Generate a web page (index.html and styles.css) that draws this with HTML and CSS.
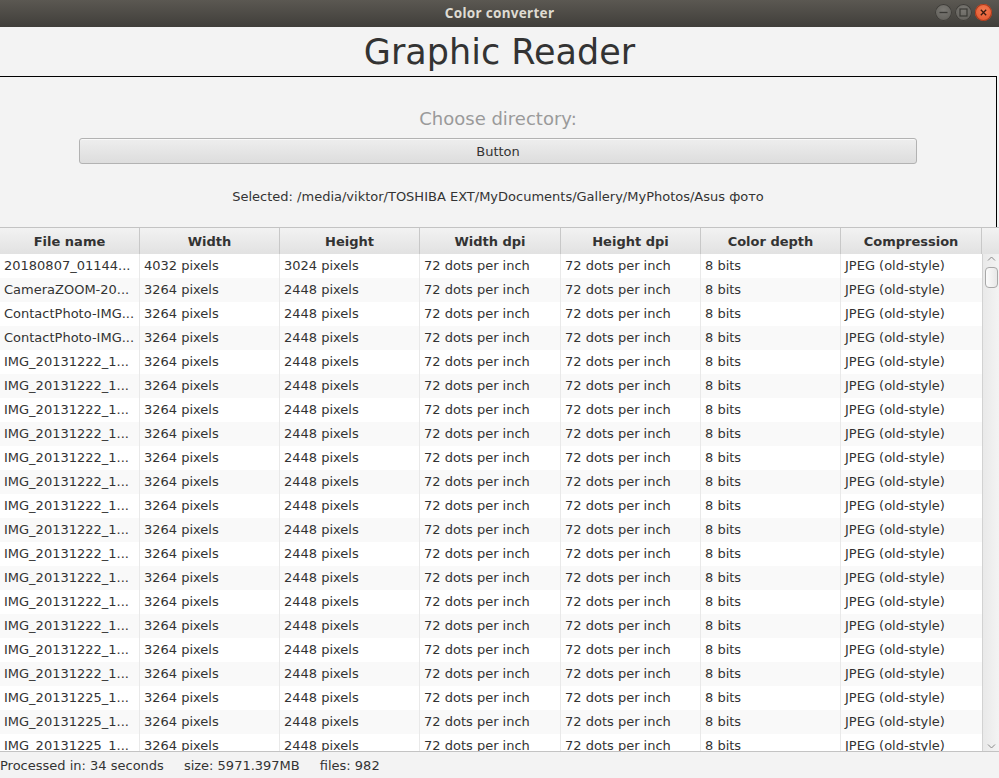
FILE: index.html
```html
<!DOCTYPE html>
<html lang="en">
<head>
<meta charset="utf-8">
<title>Color converter</title>
<link rel="stylesheet" href="styles.css">
</head>
<body>
<div class="window">
  <div class="titlebar">
    <span class="title">Color converter</span>
    <div class="wbtns">
      <span class="wbtn"><svg width="17" height="17" viewBox="0 0 17 17"><path d="M4.5 8.5h8" stroke="#3a3935" stroke-width="1.3"/></svg></span>
      <span class="wbtn"><svg width="17" height="17" viewBox="0 0 17 17"><rect x="5" y="5" width="7" height="7" fill="none" stroke="#3a3935" stroke-width="1.2"/></svg></span>
      <span class="wbtn close"><svg width="17" height="17" viewBox="0 0 17 17"><path d="M5.8 5.8l5.4 5.4M11.2 5.8l-5.4 5.4" stroke="#3a1a10" stroke-width="1.3"/></svg></span>
    </div>
  </div>
  <div class="app">
    <h1 class="heading">Graphic Reader</h1>
    <div class="panel">
      <div class="choose">Choose directory:</div>
      <button class="btn">Button</button>
      <div class="selected">Selected: /media/viktor/TOSHIBA EXT/MyDocuments/Gallery/MyPhotos/Asus фото</div>
    </div>
    <div class="table">
      <div class="thead">
        <div class="th">File name</div>
        <div class="th">Width</div>
        <div class="th">Height</div>
        <div class="th">Width dpi</div>
        <div class="th">Height dpi</div>
        <div class="th">Color depth</div>
        <div class="th">Compression</div>
        <div class="th filler"></div>
      </div>
      <div class="tbody-wrap">
        <div class="tbody">
          <div class="tr"><div class="td">20180807_01144...</div><div class="td">4032 pixels</div><div class="td">3024 pixels</div><div class="td">72 dots per inch</div><div class="td">72 dots per inch</div><div class="td">8 bits</div><div class="td">JPEG (old-style)</div></div>
          <div class="tr"><div class="td">CameraZOOM-20...</div><div class="td">3264 pixels</div><div class="td">2448 pixels</div><div class="td">72 dots per inch</div><div class="td">72 dots per inch</div><div class="td">8 bits</div><div class="td">JPEG (old-style)</div></div>
          <div class="tr"><div class="td">ContactPhoto-IMG...</div><div class="td">3264 pixels</div><div class="td">2448 pixels</div><div class="td">72 dots per inch</div><div class="td">72 dots per inch</div><div class="td">8 bits</div><div class="td">JPEG (old-style)</div></div>
          <div class="tr"><div class="td">ContactPhoto-IMG...</div><div class="td">3264 pixels</div><div class="td">2448 pixels</div><div class="td">72 dots per inch</div><div class="td">72 dots per inch</div><div class="td">8 bits</div><div class="td">JPEG (old-style)</div></div>
          <div class="tr"><div class="td">IMG_20131222_1...</div><div class="td">3264 pixels</div><div class="td">2448 pixels</div><div class="td">72 dots per inch</div><div class="td">72 dots per inch</div><div class="td">8 bits</div><div class="td">JPEG (old-style)</div></div>
          <div class="tr"><div class="td">IMG_20131222_1...</div><div class="td">3264 pixels</div><div class="td">2448 pixels</div><div class="td">72 dots per inch</div><div class="td">72 dots per inch</div><div class="td">8 bits</div><div class="td">JPEG (old-style)</div></div>
          <div class="tr"><div class="td">IMG_20131222_1...</div><div class="td">3264 pixels</div><div class="td">2448 pixels</div><div class="td">72 dots per inch</div><div class="td">72 dots per inch</div><div class="td">8 bits</div><div class="td">JPEG (old-style)</div></div>
          <div class="tr"><div class="td">IMG_20131222_1...</div><div class="td">3264 pixels</div><div class="td">2448 pixels</div><div class="td">72 dots per inch</div><div class="td">72 dots per inch</div><div class="td">8 bits</div><div class="td">JPEG (old-style)</div></div>
          <div class="tr"><div class="td">IMG_20131222_1...</div><div class="td">3264 pixels</div><div class="td">2448 pixels</div><div class="td">72 dots per inch</div><div class="td">72 dots per inch</div><div class="td">8 bits</div><div class="td">JPEG (old-style)</div></div>
          <div class="tr"><div class="td">IMG_20131222_1...</div><div class="td">3264 pixels</div><div class="td">2448 pixels</div><div class="td">72 dots per inch</div><div class="td">72 dots per inch</div><div class="td">8 bits</div><div class="td">JPEG (old-style)</div></div>
          <div class="tr"><div class="td">IMG_20131222_1...</div><div class="td">3264 pixels</div><div class="td">2448 pixels</div><div class="td">72 dots per inch</div><div class="td">72 dots per inch</div><div class="td">8 bits</div><div class="td">JPEG (old-style)</div></div>
          <div class="tr"><div class="td">IMG_20131222_1...</div><div class="td">3264 pixels</div><div class="td">2448 pixels</div><div class="td">72 dots per inch</div><div class="td">72 dots per inch</div><div class="td">8 bits</div><div class="td">JPEG (old-style)</div></div>
          <div class="tr"><div class="td">IMG_20131222_1...</div><div class="td">3264 pixels</div><div class="td">2448 pixels</div><div class="td">72 dots per inch</div><div class="td">72 dots per inch</div><div class="td">8 bits</div><div class="td">JPEG (old-style)</div></div>
          <div class="tr"><div class="td">IMG_20131222_1...</div><div class="td">3264 pixels</div><div class="td">2448 pixels</div><div class="td">72 dots per inch</div><div class="td">72 dots per inch</div><div class="td">8 bits</div><div class="td">JPEG (old-style)</div></div>
          <div class="tr"><div class="td">IMG_20131222_1...</div><div class="td">3264 pixels</div><div class="td">2448 pixels</div><div class="td">72 dots per inch</div><div class="td">72 dots per inch</div><div class="td">8 bits</div><div class="td">JPEG (old-style)</div></div>
          <div class="tr"><div class="td">IMG_20131222_1...</div><div class="td">3264 pixels</div><div class="td">2448 pixels</div><div class="td">72 dots per inch</div><div class="td">72 dots per inch</div><div class="td">8 bits</div><div class="td">JPEG (old-style)</div></div>
          <div class="tr"><div class="td">IMG_20131222_1...</div><div class="td">3264 pixels</div><div class="td">2448 pixels</div><div class="td">72 dots per inch</div><div class="td">72 dots per inch</div><div class="td">8 bits</div><div class="td">JPEG (old-style)</div></div>
          <div class="tr"><div class="td">IMG_20131222_1...</div><div class="td">3264 pixels</div><div class="td">2448 pixels</div><div class="td">72 dots per inch</div><div class="td">72 dots per inch</div><div class="td">8 bits</div><div class="td">JPEG (old-style)</div></div>
          <div class="tr"><div class="td">IMG_20131225_1...</div><div class="td">3264 pixels</div><div class="td">2448 pixels</div><div class="td">72 dots per inch</div><div class="td">72 dots per inch</div><div class="td">8 bits</div><div class="td">JPEG (old-style)</div></div>
          <div class="tr"><div class="td">IMG_20131225_1...</div><div class="td">3264 pixels</div><div class="td">2448 pixels</div><div class="td">72 dots per inch</div><div class="td">72 dots per inch</div><div class="td">8 bits</div><div class="td">JPEG (old-style)</div></div>
          <div class="tr"><div class="td">IMG_20131225_1...</div><div class="td">3264 pixels</div><div class="td">2448 pixels</div><div class="td">72 dots per inch</div><div class="td">72 dots per inch</div><div class="td">8 bits</div><div class="td">JPEG (old-style)</div></div>
        </div>
        <div class="vscroll">
          <svg class="arrow" width="15" height="10" viewBox="0 0 15 10"><path d="M4 6.5l3.5-3.5 3.5 3.5" fill="none" stroke="#8a8a8a" stroke-width="1"/></svg>
          <div class="track"><div class="thumb"></div></div>
          <svg class="arrow" width="15" height="10" viewBox="0 0 15 10"><path d="M4 3.5l3.5 3.5 3.5-3.5" fill="none" stroke="#8a8a8a" stroke-width="1"/></svg>
        </div>
      </div>
    </div>
    <div class="status">
      <span>Processed in: 34 seconds</span>
      <span>size: 5971.397MB</span>
      <span>files: 982</span>
    </div>
  </div>
</div>
</body>
</html>
```

FILE: styles.css
```css
* { box-sizing: border-box; }
html, body { margin: 0; padding: 0; }
body {
  width: 999px;
  height: 778px;
  overflow: hidden;
  background: #f3f3f3;
  font-family: "DejaVu Sans", "Noto Sans", sans-serif;
  color: #333333;
}
.window { width: 999px; height: 778px; display: flex; flex-direction: column; }

.titlebar {
  height: 27px;
  flex: none;
  background: linear-gradient(#5b5852, #403e3a);
  display: flex;
  align-items: center;
  justify-content: center;
  position: relative;
}
.title {
  font-family: "Noto Sans", "DejaVu Sans", sans-serif;
  font-weight: 700;
  font-size: 13.5px;
  color: #dfdbd2;
  letter-spacing: 0.3px;
  margin-top: -2px;
}
.wbtns {
  position: absolute;
  right: 7px;
  top: 4px;
  display: flex;
  gap: 3px;
}
.wbtn {
  width: 17px;
  height: 17px;
  border-radius: 50%;
  background: radial-gradient(circle at 50% 35%, #7a7873, #5c5a55);
  box-shadow: inset 0 0 0 1px #3f3d39;
  display: block;
}
.wbtn svg { display: block; }
.wbtn.close {
  background: radial-gradient(circle at 50% 35%, #f47a4f, #e0502a);
  box-shadow: inset 0 0 0 1px #a63a1c;
}

.app { flex: 1; display: flex; flex-direction: column; }

.heading {
  margin: 0;
  height: 49px;
  line-height: 50px;
  text-align: center;
  font-weight: 400;
  font-size: 35px;
  color: #333333;
}

.panel {
  width: 997px;
  height: 151px;
  border-top: 1px solid #000;
  border-right: 1px solid #000;
  display: flex;
  flex-direction: column;
  align-items: center;
  padding-top: 32px;
}
.choose {
  font-size: 18px;
  line-height: 20px;
  color: #9a9a9a;
}
.btn {
  margin-top: 9px;
  width: 838px;
  height: 26px;
  border: 1px solid #b2b2b2;
  border-radius: 3px;
  background: linear-gradient(#eeeeee, #dddddd);
  box-shadow: inset 0 1px 0 #f8f8f8;
  font-family: "DejaVu Sans", sans-serif;
  font-size: 13px;
  color: #333333;
  padding: 0;
}
.selected {
  margin-top: 25px;
  font-size: 13px;
  line-height: 16px;
  color: #333333;
}

.table {
  width: 999px;
  display: flex;
  flex-direction: column;
  border-top: 1px solid #c3c3c3;
  border-bottom: 1px solid #c3c3c3;
}
.thead {
  display: grid;
  grid-template-columns: 140px 140px 140px 141px 140px 140px 141px 17px;
  height: 26px;
  border-bottom: 1px solid #c3c3c3;
}
.th {
  background: linear-gradient(#f2f2f2, #e1e1e1);
  border-right: 1px solid #c8c8c8;
  font-weight: 700;
  font-size: 13px;
  line-height: 27px;
  text-align: center;
  color: #333333;
}
.th.filler { border-right: none; }

.tbody-wrap {
  height: 497px;
  display: flex;
  overflow: hidden;
}
.tbody { width: 982px; flex: none; }
.tr {
  display: grid;
  grid-template-columns: 140px 140px 140px 141px 140px 140px 141px;
  height: 24px;
  background: #ffffff;
}
.tr:nth-child(even) { background: #f9f9f9; }
.td {
  border-right: 1px solid #e9e9e9;
  padding-left: 4px;
  font-size: 13px;
  line-height: 24px;
  white-space: nowrap;
  overflow: hidden;
  color: #333333;
}
.td:last-child { border-right: none; }

.vscroll {
  width: 17px;
  flex: none;
  background: linear-gradient(90deg, #e9e9e9, #f3f3f3);
  border-left: 1px solid #d2d2d2;
  display: flex;
  flex-direction: column;
  align-items: center;
}
.arrow { display: block; flex: none; }
.track { flex: 1; width: 100%; display: flex; justify-content: center; }
.thumb {
  margin-top: 3px;
  width: 13px;
  height: 21px;
  border: 1px solid #a8a8a8;
  border-radius: 4px;
  background: linear-gradient(90deg, #fbfbfb, #e8e8e8);
}

.status {
  height: 26px;
  display: flex;
  gap: 20px;
  font-size: 13px;
  line-height: 27px;
  color: #333333;
}
```
